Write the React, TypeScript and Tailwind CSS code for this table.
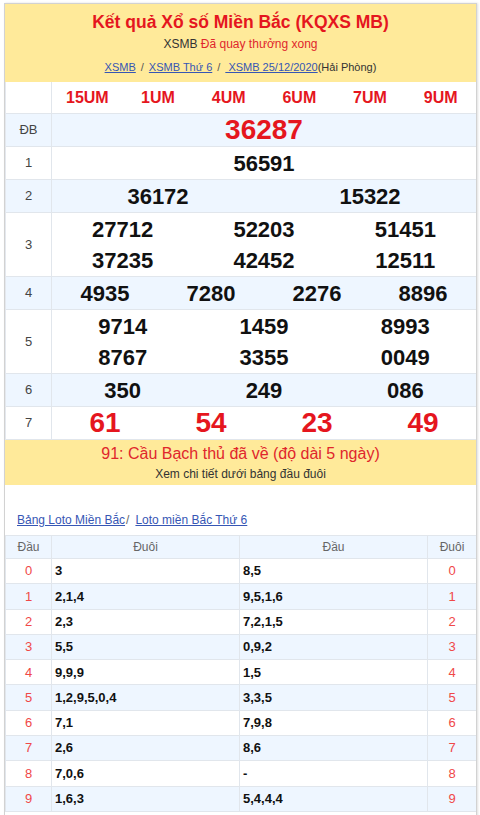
import React from "react";

const FONT = { fontFamily: '"Liberation Sans", Arial, sans-serif' };

const COLS: Record<number, string> = {
  1: "grid-cols-1",
  2: "grid-cols-2",
  3: "grid-cols-3",
  4: "grid-cols-4",
  6: "grid-cols-6",
};

type Row = { label: string; cols: number; nums: string[]; lines: number; big?: boolean; blue: boolean };

const rows: Row[] = [
  { label: "ĐB", cols: 1, nums: ["36287"], lines: 1, big: true, blue: true },
  { label: "1", cols: 1, nums: ["56591"], lines: 1, blue: false },
  { label: "2", cols: 2, nums: ["36172", "15322"], lines: 1, blue: true },
  { label: "3", cols: 3, nums: ["27712", "52203", "51451", "37235", "42452", "12511"], lines: 2, blue: false },
  { label: "4", cols: 4, nums: ["4935", "7280", "2276", "8896"], lines: 1, blue: true },
  { label: "5", cols: 3, nums: ["9714", "1459", "8993", "8767", "3355", "0049"], lines: 2, blue: false },
  { label: "6", cols: 3, nums: ["350", "249", "086"], lines: 1, blue: true },
  { label: "7", cols: 4, nums: ["61", "54", "23", "49"], lines: 1, big: true, blue: false },
];

const loto: [string, string][] = [
  ["3", "8,5"],
  ["2,1,4", "9,5,1,6"],
  ["2,3", "7,2,1,5"],
  ["5,5", "0,9,2"],
  ["9,9,9", "1,5"],
  ["1,2,9,5,0,4", "3,3,5"],
  ["7,1", "7,9,8"],
  ["2,6", "8,6"],
  ["7,0,6", "-"],
  ["1,6,3", "5,4,4,4"],
];

export default function App() {
  return (
    <div className="w-[480px] min-h-[815px] bg-white pl-[4px] pt-[3px]" style={FONT}>
      <div className="w-[473px] border border-[#d2d2d2] shadow-[1px_0_2px_rgba(0,0,0,0.12)] bg-white">
        {/* header */}
        <div className="bg-[#ffea9a] pt-[6px] pb-[6px] text-center">
          <div className="text-[17.5px] leading-[24px] font-bold text-[#e5161e]">
            Kết quả Xổ số Miền Bắc (KQXS MB)
          </div>
          <div className="text-[12px] leading-[20px] text-[#333]">
            XSMB <span className="text-[#e0262c]">Đã quay thưởng xong</span>
          </div>
          <div className="mt-[4px] text-[11px] leading-[18px] text-[#333]">
            <span className="text-[#3656b4] underline">XSMB</span>
            <span className="mx-[5px] text-[#555]">/</span>
            <span className="text-[#3656b4] underline">XSMB Thứ 6</span>
            <span className="mx-[5px] text-[#555]">/</span>
            <span className="text-[#3656b4] underline">&nbsp;XSMB 25/12/2020</span>
            (Hải Phòng)
          </div>
        </div>

        {/* result table */}
        <div className="border-l border-[#e4e8ee]">
          <div className="flex h-[32px] border-b border-[#e1e6ec] bg-white">
            <div className="w-[46px] border-r border-[#e1e6ec]" />
            <div className="grid flex-1 grid-cols-6 items-center text-center text-[16px] font-bold text-[#e5161e]">
              {["15UM", "1UM", "4UM", "6UM", "7UM", "9UM"].map((h) => (
                <div key={h}>{h}</div>
              ))}
            </div>
          </div>
          {rows.map((r) => (
            <div
              key={r.label}
              className={`flex border-b border-[#e1e6ec] ${r.blue ? "bg-[#eef6ff]" : "bg-white"} ${
                r.lines === 2 ? "h-[64px]" : "h-[33px]"
              }`}
            >
              <div className="flex w-[46px] items-center justify-center border-r border-[#e1e6ec] text-[13px] text-[#444]">
                {r.label}
              </div>
              <div className={`grid flex-1 ${COLS[r.cols]} content-center text-center`}>
                {r.nums.map((n, i) => (
                  <div
                    key={i}
                    className={
                      r.big
                        ? "text-[28px] leading-[32px] font-bold text-[#e5161e]"
                        : "text-[22px] leading-[31px] font-bold text-[#111]"
                    }
                  >
                    {n}
                  </div>
                ))}
              </div>
            </div>
          ))}
        </div>

        {/* notice */}
        <div className="bg-[#ffea9a] h-[45px] text-center">
          <div className="pt-[4px] text-[16px] leading-[20px] text-[#e0262c]">
            91: Cầu Bạch thủ đã về (độ dài 5 ngày)
          </div>
          <div className="text-[12px] leading-[20px] text-[#333]">Xem chi tiết dưới bảng đầu đuôi</div>
        </div>

        {/* loto links */}
        <div className="pt-[27px] pb-[6px] pl-[12px] text-[12px] leading-[17px] text-[#666]">
          <span className="text-[#3656b4] underline">Bảng Loto Miền Bắc</span>
          <span className="ml-[1px] mr-[6px]">/</span>
          <span className="text-[#3656b4] underline">Loto miền Bắc Thứ 6</span>
        </div>

        {/* loto table */}
        <div className="border-l border-t border-[#e1e6ec]">
          <div className="flex h-[23px] items-center border-b border-[#e1e6ec] bg-[#eef6ff] text-[12px] text-[#666]">
            <div className="flex h-full w-[46px] items-center justify-center border-r border-[#e1e6ec]">Đầu</div>
            <div className="flex h-full w-[188px] items-center justify-center border-r border-[#e1e6ec]">Đuôi</div>
            <div className="flex h-full w-[188px] items-center justify-center border-r border-[#e1e6ec]">Đầu</div>
            <div className="flex h-full flex-1 items-center justify-center">Đuôi</div>
          </div>
          {loto.map(([a, b], i) => (
            <div
              key={i}
              className={`flex h-[25.3px] items-center border-b border-[#e1e6ec] text-[13px] ${
                i % 2 === 1 ? "bg-[#eef6ff]" : "bg-white"
              }`}
            >
              <div className="flex h-full w-[46px] items-center justify-center border-r border-[#e1e6ec] text-[#f04848]">
                {i}
              </div>
              <div className="flex h-full w-[188px] items-center border-r border-[#e1e6ec] pl-[3px] font-bold text-[#111]">
                {a}
              </div>
              <div className="flex h-full w-[188px] items-center border-r border-[#e1e6ec] pl-[3px] font-bold text-[#111]">
                {b}
              </div>
              <div className="flex h-full flex-1 items-center justify-center text-[#f04848]">{i}</div>
            </div>
          ))}
        </div>
        <div className="h-[40px]" />
      </div>
    </div>
  );
}
